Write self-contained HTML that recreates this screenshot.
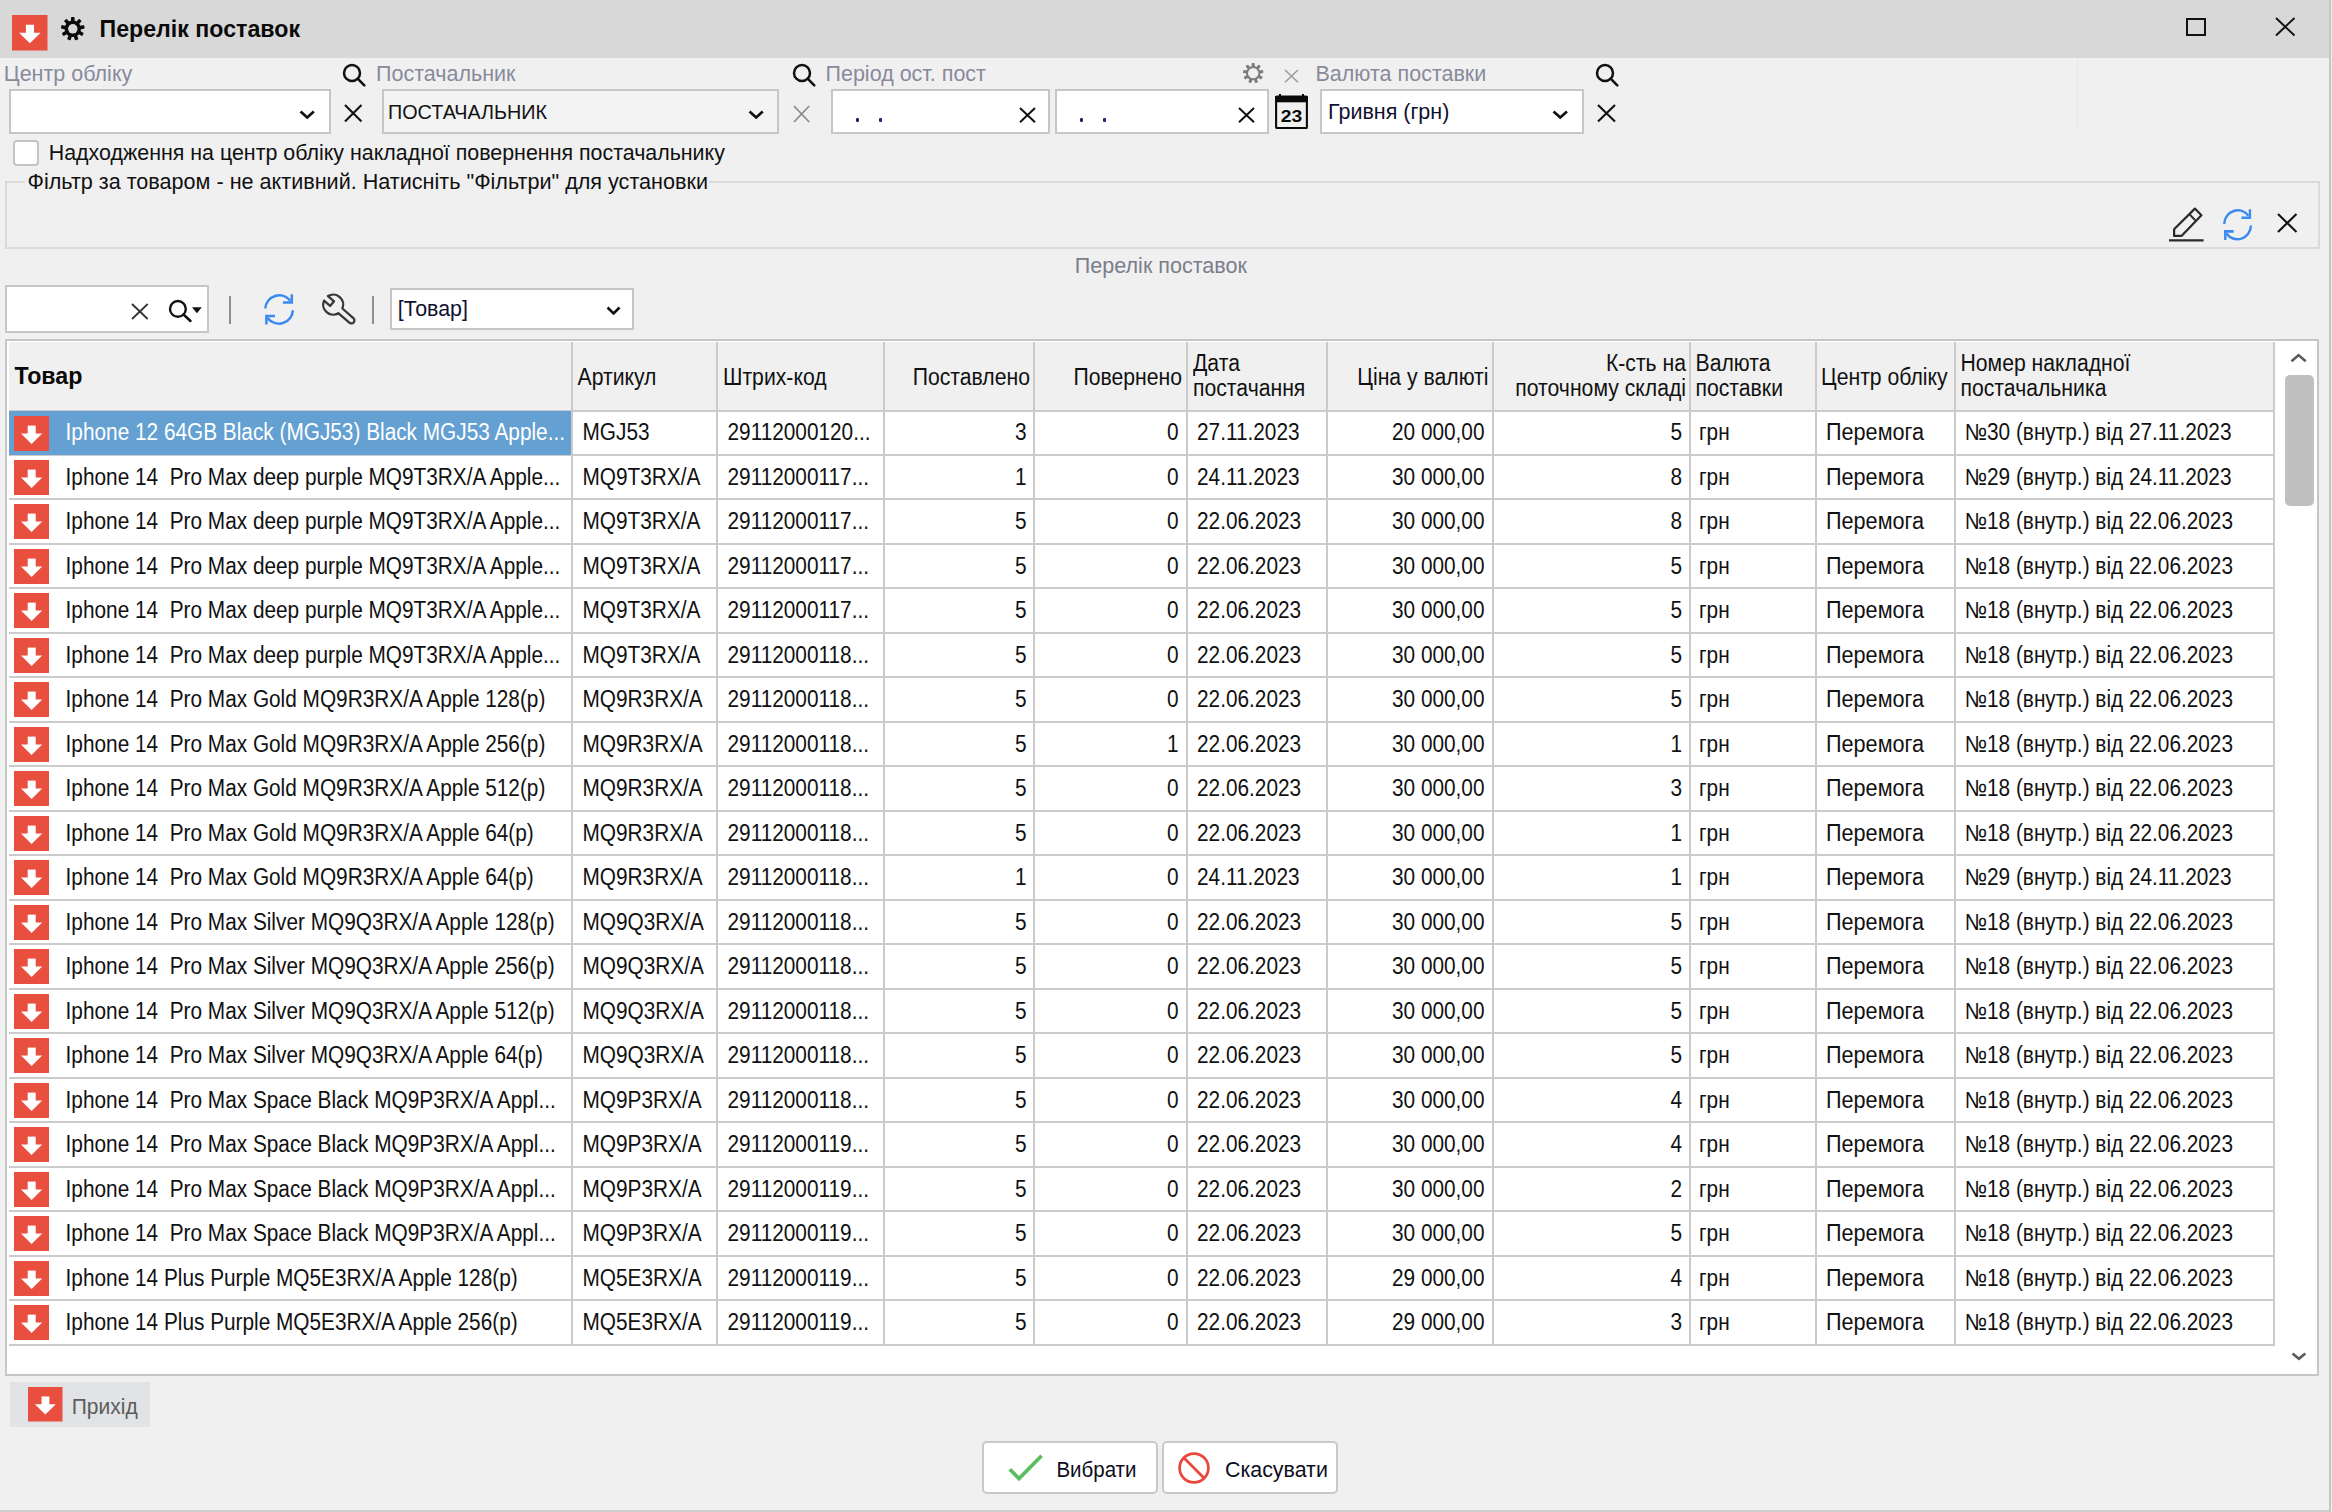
<!DOCTYPE html>
<html><head><meta charset="utf-8"><title>Перелік поставок</title>
<style>
html,body{margin:0;padding:0;}
body{width:2332px;height:1512px;position:relative;overflow:hidden;background:#f0f0f0;font-family:"Liberation Sans", sans-serif;}
.a{position:absolute;}
.t{position:absolute;line-height:1;white-space:pre;}
svg{overflow:visible;}
</style></head><body>
<div class="a" style="left:0.00px;top:0.00px;width:2332.00px;height:57.60px;background:#d8d8d8;"></div>
<svg class="a" style="left:12.30px;top:15.00px" width="35.50" height="35.50" viewBox="0 0 35.50 35.50"><g transform="scale(1.0143)"><rect width="35" height="35" fill="#e94f3f"/><rect x="13.7" y="9.6" width="8" height="9" fill="#fff"/><path d="M7 17.6L28.2 17.6L17.6 27.9Z" fill="#fff"/></g></svg>
<svg class="a" style="left:58.70px;top:15.00px" width="27.60" height="27.60" viewBox="0 0 27.60 27.60"><g transform="translate(13.8 13.8)"><g fill="#0a0a0a"><rect x="-1.77" y="-11.80" width="3.54" height="4.54" rx="0.8" transform="rotate(0.0)"/><rect x="-1.77" y="-11.80" width="3.54" height="4.54" rx="0.8" transform="rotate(40.0)"/><rect x="-1.77" y="-11.80" width="3.54" height="4.54" rx="0.8" transform="rotate(80.0)"/><rect x="-1.77" y="-11.80" width="3.54" height="4.54" rx="0.8" transform="rotate(120.0)"/><rect x="-1.77" y="-11.80" width="3.54" height="4.54" rx="0.8" transform="rotate(160.0)"/><rect x="-1.77" y="-11.80" width="3.54" height="4.54" rx="0.8" transform="rotate(200.0)"/><rect x="-1.77" y="-11.80" width="3.54" height="4.54" rx="0.8" transform="rotate(240.0)"/><rect x="-1.77" y="-11.80" width="3.54" height="4.54" rx="0.8" transform="rotate(280.0)"/><rect x="-1.77" y="-11.80" width="3.54" height="4.54" rx="0.8" transform="rotate(320.0)"/><circle r="8.26"/></g><circle r="4.72" fill="#d8d8d8"/></g></svg>
<div class="t" style="top:17.66px;font-size:23.2px;color:#0a0a0a;font-weight:700;left:99.50px;transform:scale(1.0,1.02);transform-origin:0 19.64px;">Перелік поставок</div>
<div class="a" style="left:2186.00px;top:17.50px;width:19.50px;height:18.70px;box-sizing:border-box;border:2.3px solid #111;"></div>
<svg class="a" style="left:2272.70px;top:15.30px" width="24.50" height="23.50" viewBox="0 0 24.50 23.50"><path d="M3 3L21.50 20.50M21.50 3L3 20.50" stroke="#111" stroke-width="1.9" fill="none"/></svg>
<div class="a" style="left:2329.00px;top:0.00px;width:2.00px;height:1512.00px;background:#c6c6c6;"></div>
<div class="a" style="left:2331.00px;top:0.00px;width:1.00px;height:1512.00px;background:#ebebeb;"></div>
<div class="a" style="left:0.00px;top:1509.50px;width:2329.00px;height:2.50px;background:#cdcdcd;"></div>
<div class="t" style="top:64.10px;font-size:21.5px;color:#888a9c;left:3.75px;">Центр обліку</div>
<svg class="a" style="left:341.30px;top:61.70px" width="26.30" height="26.30" viewBox="0 0 26.30 26.30"><circle cx="11.00" cy="11.00" r="8.0" stroke="#111" stroke-width="2.5" fill="none"/><path d="M16.66 16.66L23.30 23.30" stroke="#111" stroke-width="2.6" stroke-linecap="round"/></svg>
<div class="t" style="top:64.10px;font-size:21.5px;color:#888a9c;left:376.00px;">Постачальник</div>
<svg class="a" style="left:790.80px;top:61.70px" width="26.30" height="26.30" viewBox="0 0 26.30 26.30"><circle cx="11.00" cy="11.00" r="8.0" stroke="#111" stroke-width="2.5" fill="none"/><path d="M16.66 16.66L23.30 23.30" stroke="#111" stroke-width="2.6" stroke-linecap="round"/></svg>
<div class="t" style="top:64.10px;font-size:21.5px;color:#888a9c;left:825.50px;">Період ост. пост</div>
<svg class="a" style="left:1241.10px;top:61.40px" width="24.40" height="24.40" viewBox="0 0 24.40 24.40"><g transform="translate(12.2 12.2)"><g fill="#7c7c7c"><rect x="-1.53" y="-10.20" width="3.06" height="4.06" rx="0.8" transform="rotate(0.0)"/><rect x="-1.53" y="-10.20" width="3.06" height="4.06" rx="0.8" transform="rotate(40.0)"/><rect x="-1.53" y="-10.20" width="3.06" height="4.06" rx="0.8" transform="rotate(80.0)"/><rect x="-1.53" y="-10.20" width="3.06" height="4.06" rx="0.8" transform="rotate(120.0)"/><rect x="-1.53" y="-10.20" width="3.06" height="4.06" rx="0.8" transform="rotate(160.0)"/><rect x="-1.53" y="-10.20" width="3.06" height="4.06" rx="0.8" transform="rotate(200.0)"/><rect x="-1.53" y="-10.20" width="3.06" height="4.06" rx="0.8" transform="rotate(240.0)"/><rect x="-1.53" y="-10.20" width="3.06" height="4.06" rx="0.8" transform="rotate(280.0)"/><rect x="-1.53" y="-10.20" width="3.06" height="4.06" rx="0.8" transform="rotate(320.0)"/><circle r="7.14"/></g><circle r="5.14" fill="#f0f0f0"/></g></svg>
<svg class="a" style="left:1281.50px;top:66.80px" width="19.00" height="18.20" viewBox="0 0 19.00 18.20"><path d="M3 3L16.00 15.20M16.00 3L3 15.20" stroke="#9a9a9a" stroke-width="1.5" fill="none"/></svg>
<div class="t" style="top:64.10px;font-size:21.5px;color:#888a9c;left:1315.50px;">Валюта поставки</div>
<svg class="a" style="left:1594.30px;top:61.70px" width="26.30" height="26.30" viewBox="0 0 26.30 26.30"><circle cx="11.00" cy="11.00" r="8.0" stroke="#111" stroke-width="2.5" fill="none"/><path d="M16.66 16.66L23.30 23.30" stroke="#111" stroke-width="2.6" stroke-linecap="round"/></svg>
<div class="a" style="left:2077.00px;top:58.00px;width:1.20px;height:73.00px;background:#e7e7e7;"></div>
<div class="a" style="left:8.80px;top:88.60px;width:322.40px;height:45.80px;background:#fff;box-sizing:border-box;border:2px solid #c6c6c6;"></div>
<svg class="a" style="left:298.80px;top:110.20px" width="16.40" height="9.70" viewBox="0 0 16.40 9.70"><path d="M1.55 1.55L8.20 7.55L14.85 1.55" stroke="#111" stroke-width="2.7" fill="none"/></svg>
<svg class="a" style="left:342.30px;top:101.70px" width="22.50" height="22.60" viewBox="0 0 22.50 22.60"><path d="M3 3L19.50 19.60M19.50 3L3 19.60" stroke="#111" stroke-width="2.1" fill="none"/></svg>
<div class="a" style="left:381.80px;top:88.60px;width:397.40px;height:45.80px;background:#f3f3f3;box-sizing:border-box;border:2px solid #c6c6c6;"></div>
<div class="t" style="top:102.84px;font-size:19.8px;color:#111;left:388.00px;transform:scale(1.0,1.06);transform-origin:0 16.76px;">ПОСТАЧАЛЬНИК</div>
<svg class="a" style="left:747.50px;top:110.20px" width="16.30" height="9.70" viewBox="0 0 16.30 9.70"><path d="M1.55 1.55L8.15 7.55L14.75 1.55" stroke="#111" stroke-width="2.7" fill="none"/></svg>
<svg class="a" style="left:791.30px;top:102.50px" width="21.20" height="22.00" viewBox="0 0 21.20 22.00"><path d="M3 3L18.20 19.00M18.20 3L3 19.00" stroke="#8c8c8c" stroke-width="1.8" fill="none"/></svg>
<div class="a" style="left:830.80px;top:88.60px;width:219.40px;height:45.80px;background:#fff;box-sizing:border-box;border:2px solid #c6c6c6;"></div>
<svg class="a" style="left:1016.50px;top:104.50px" width="21.00" height="20.30" viewBox="0 0 21.00 20.30"><path d="M3 3L18.00 17.30M18.00 3L3 17.30" stroke="#111" stroke-width="2.0" fill="none"/></svg>
<div class="a" style="left:1055.30px;top:88.60px;width:213.40px;height:45.80px;background:#fff;box-sizing:border-box;border:2px solid #c6c6c6;"></div>
<div class="a" style="left:855.70px;top:118.20px;width:3.60px;height:3.60px;background:#1e2a6e;border-radius:1px;"></div>
<div class="a" style="left:878.70px;top:118.20px;width:3.60px;height:3.60px;background:#1e2a6e;border-radius:1px;"></div>
<div class="a" style="left:1079.70px;top:118.20px;width:3.60px;height:3.60px;background:#1e2a6e;border-radius:1px;"></div>
<div class="a" style="left:1102.70px;top:118.20px;width:3.60px;height:3.60px;background:#1e2a6e;border-radius:1px;"></div>
<svg class="a" style="left:1235.50px;top:104.50px" width="21.00" height="20.30" viewBox="0 0 21.00 20.30"><path d="M3 3L18.00 17.30M18.00 3L3 17.30" stroke="#111" stroke-width="2.0" fill="none"/></svg>
<svg class="a" style="left:1275.40px;top:94.20px" width="33.00" height="35.20" viewBox="0 0 33.00 35.20"><rect x="1.1" y="2.6" width="30.8" height="31.4" rx="0.8" fill="none" stroke="#0a0a0a" stroke-width="2.1"/><rect x="0.2" y="2" width="32.6" height="6.3" fill="#0a0a0a"/><rect x="4" y="0" width="2" height="3" fill="#0a0a0a"/><rect x="27" y="0" width="2" height="3" fill="#0a0a0a"/><text x="16.5" y="28.2" font-family="Liberation Sans" font-weight="700" font-size="17" text-anchor="middle" fill="#0a0a0a" textLength="21.5" lengthAdjust="spacingAndGlyphs">23</text></svg>
<div class="a" style="left:1320.30px;top:88.60px;width:263.90px;height:45.80px;background:#fff;box-sizing:border-box;border:2px solid #c6c6c6;"></div>
<div class="t" style="top:102.10px;font-size:21.5px;color:#101030;left:1328.00px;">Гривня (грн)</div>
<svg class="a" style="left:1552.00px;top:110.20px" width="16.50" height="9.70" viewBox="0 0 16.50 9.70"><path d="M1.55 1.55L8.25 7.55L14.95 1.55" stroke="#111" stroke-width="2.7" fill="none"/></svg>
<svg class="a" style="left:1594.50px;top:101.70px" width="23.00" height="22.60" viewBox="0 0 23.00 22.60"><path d="M3 3L20.00 19.60M20.00 3L3 19.60" stroke="#111" stroke-width="2.1" fill="none"/></svg>
<div class="a" style="left:13.00px;top:140.00px;width:26.00px;height:25.50px;background:#fff;box-sizing:border-box;border:2px solid #c4c4c4;border-radius:4px;"></div>
<div class="t" style="top:142.88px;font-size:21.4px;color:#111;left:48.75px;">Надходження на центр обліку накладної повернення постачальнику</div>
<div class="a" style="left:5.00px;top:181.00px;width:2315.00px;height:68.00px;box-sizing:border-box;border:2px solid #dadada;"></div>
<div class="a" style="left:25.00px;top:170.00px;width:684.00px;height:20.00px;background:#f0f0f0;"></div>
<div class="t" style="top:171.32px;font-size:21.6px;color:#111;left:27.50px;">Фільтр за товаром - не активний. Натисніть "Фільтри" для установки</div>
<svg class="a" style="left:2167.00px;top:206.00px" width="38.00" height="38.00" viewBox="0 0 38.00 38.00"><path d="M27.9 2.6L34.4 9.2L14.5 29.9L7.1 29.9L7.1 23.2Z" fill="none" stroke="#2a2a2a" stroke-width="2.2" stroke-linejoin="round"/><path d="M22.6 8.4L28.2 14.2" stroke="#2a2a2a" stroke-width="2.0"/><path d="M2 34.4L36.6 34.4" stroke="#2a2a2a" stroke-width="2.4"/></svg>
<svg class="a" style="left:2222.30px;top:207.80px" width="32.01" height="33.66" viewBox="0 0 32.01 33.66"><g transform="scale(0.97 1.02)" fill="none" stroke="#3a89f0" stroke-width="2.5"><path d="M2.3 15.5A14 14 0 0 1 27.2 7.6"/><path d="M29.9 17.2A14 14 0 0 1 4.6 24.9"/><path d="M28.8 1.2L28.8 9.6L20.0 9.6"/><path d="M3.4 31.4L3.4 22.9L12.0 22.9"/></g></svg>
<svg class="a" style="left:2275.30px;top:211.30px" width="24.50" height="24.00" viewBox="0 0 24.50 24.00"><path d="M3 3L21.50 21.00M21.50 3L3 21.00" stroke="#111" stroke-width="2.1" fill="none"/></svg>
<div class="t" style="top:254.96px;font-size:21.55px;color:#7b7d8b;left:1074.80px;">Перелік поставок</div>
<div class="a" style="left:5.20px;top:284.80px;width:204.20px;height:48.40px;background:#fff;box-sizing:border-box;border:2px solid #c6c6c6;"></div>
<svg class="a" style="left:128.80px;top:301.30px" width="21.70" height="21.00" viewBox="0 0 21.70 21.00"><path d="M3 3L18.70 18.00M18.70 3L3 18.00" stroke="#333" stroke-width="1.8" fill="none"/></svg>
<svg class="a" style="left:167.00px;top:298.20px" width="26.50" height="26.00" viewBox="0 0 26.50 26.00"><circle cx="10.90" cy="10.90" r="7.9" stroke="#111" stroke-width="2.4" fill="none"/><path d="M16.49 16.49L23.50 23.00" stroke="#111" stroke-width="2.5" stroke-linecap="round"/></svg>
<svg class="a" style="left:192.40px;top:307.00px" width="10.00" height="7.00" viewBox="0 0 10.00 7.00"><path d="M0 0.2L9.8 0.2L4.9 6.2Z" fill="#111"/></svg>
<div class="a" style="left:229.00px;top:295.90px;width:2.00px;height:28.30px;background:#8f8f8f;"></div>
<svg class="a" style="left:263.40px;top:293.20px" width="33.00" height="33.00" viewBox="0 0 33.00 33.00"><g transform="scale(1.0 1.0)" fill="none" stroke="#3a89f0" stroke-width="2.5"><path d="M2.3 15.5A14 14 0 0 1 27.2 7.6"/><path d="M29.9 17.2A14 14 0 0 1 4.6 24.9"/><path d="M28.8 1.2L28.8 9.6L20.0 9.6"/><path d="M3.4 31.4L3.4 22.9L12.0 22.9"/></g></svg>
<svg class="a" style="left:320.50px;top:292.80px" width="36.00" height="34.00" viewBox="0 0 36.00 34.00"><path d="M6.97 3.08A10.0 10.0 0 0 1 21.41 15.50L32.35 25.01A3.1 3.1 0 0 1 28.28 29.69L17.34 20.18A10.0 10.0 0 0 1 3.03 7.61L9.10 12.88L13.04 8.35Z" fill="none" stroke="#383838" stroke-width="2.3" stroke-linejoin="round"/></svg>
<div class="a" style="left:372.20px;top:295.90px;width:2.00px;height:28.30px;background:#8f8f8f;"></div>
<div class="a" style="left:390.10px;top:287.80px;width:244.40px;height:41.90px;background:#fff;box-sizing:border-box;border:2px solid #c6c6c6;"></div>
<div class="t" style="top:298.68px;font-size:21.4px;color:#101030;left:397.80px;">[Товар]</div>
<svg class="a" style="left:606.30px;top:305.60px" width="15.10" height="9.50" viewBox="0 0 15.10 9.50"><path d="M1.55 1.55L7.55 7.35L13.55 1.55" stroke="#111" stroke-width="2.7" fill="none"/></svg>
<div class="a" style="left:4.80px;top:338.50px;width:2314.40px;height:1037.90px;background:#fff;box-sizing:border-box;border:2px solid #c6c6c6;"></div>
<div class="a" style="left:8.50px;top:341.80px;width:2266.00px;height:68.70px;background:#f0f0f0;"></div>
<div class="a" style="left:8.50px;top:410.00px;width:2266.50px;height:2.00px;background:#cbcbcb;"></div>
<div class="a" style="left:8.50px;top:454.00px;width:2266.50px;height:2.00px;background:#cbcbcb;"></div>
<div class="a" style="left:8.50px;top:498.00px;width:2266.50px;height:2.00px;background:#cbcbcb;"></div>
<div class="a" style="left:8.50px;top:543.00px;width:2266.50px;height:2.00px;background:#cbcbcb;"></div>
<div class="a" style="left:8.50px;top:587.00px;width:2266.50px;height:2.00px;background:#cbcbcb;"></div>
<div class="a" style="left:8.50px;top:632.00px;width:2266.50px;height:2.00px;background:#cbcbcb;"></div>
<div class="a" style="left:8.50px;top:676.00px;width:2266.50px;height:2.00px;background:#cbcbcb;"></div>
<div class="a" style="left:8.50px;top:721.00px;width:2266.50px;height:2.00px;background:#cbcbcb;"></div>
<div class="a" style="left:8.50px;top:765.00px;width:2266.50px;height:2.00px;background:#cbcbcb;"></div>
<div class="a" style="left:8.50px;top:810.00px;width:2266.50px;height:2.00px;background:#cbcbcb;"></div>
<div class="a" style="left:8.50px;top:854.00px;width:2266.50px;height:2.00px;background:#cbcbcb;"></div>
<div class="a" style="left:8.50px;top:899.00px;width:2266.50px;height:2.00px;background:#cbcbcb;"></div>
<div class="a" style="left:8.50px;top:943.00px;width:2266.50px;height:2.00px;background:#cbcbcb;"></div>
<div class="a" style="left:8.50px;top:988.00px;width:2266.50px;height:2.00px;background:#cbcbcb;"></div>
<div class="a" style="left:8.50px;top:1032.00px;width:2266.50px;height:2.00px;background:#cbcbcb;"></div>
<div class="a" style="left:8.50px;top:1077.00px;width:2266.50px;height:2.00px;background:#cbcbcb;"></div>
<div class="a" style="left:8.50px;top:1121.00px;width:2266.50px;height:2.00px;background:#cbcbcb;"></div>
<div class="a" style="left:8.50px;top:1166.00px;width:2266.50px;height:2.00px;background:#cbcbcb;"></div>
<div class="a" style="left:8.50px;top:1210.00px;width:2266.50px;height:2.00px;background:#cbcbcb;"></div>
<div class="a" style="left:8.50px;top:1255.00px;width:2266.50px;height:2.00px;background:#cbcbcb;"></div>
<div class="a" style="left:8.50px;top:1299.00px;width:2266.50px;height:2.00px;background:#cbcbcb;"></div>
<div class="a" style="left:8.50px;top:1344.00px;width:2266.50px;height:2.00px;background:#cbcbcb;"></div>
<div class="a" style="left:571.00px;top:341.80px;width:2.00px;height:1004.20px;background:#cbcbcb;"></div>
<div class="a" style="left:716.00px;top:341.80px;width:2.00px;height:1004.20px;background:#cbcbcb;"></div>
<div class="a" style="left:883.00px;top:341.80px;width:2.00px;height:1004.20px;background:#cbcbcb;"></div>
<div class="a" style="left:1033.00px;top:341.80px;width:2.00px;height:1004.20px;background:#cbcbcb;"></div>
<div class="a" style="left:1186.00px;top:341.80px;width:2.00px;height:1004.20px;background:#cbcbcb;"></div>
<div class="a" style="left:1326.00px;top:341.80px;width:2.00px;height:1004.20px;background:#cbcbcb;"></div>
<div class="a" style="left:1492.00px;top:341.80px;width:2.00px;height:1004.20px;background:#cbcbcb;"></div>
<div class="a" style="left:1689.00px;top:341.80px;width:2.00px;height:1004.20px;background:#cbcbcb;"></div>
<div class="a" style="left:1815.00px;top:341.80px;width:2.00px;height:1004.20px;background:#cbcbcb;"></div>
<div class="a" style="left:1954.00px;top:341.80px;width:2.00px;height:1004.20px;background:#cbcbcb;"></div>
<div class="a" style="left:2273.00px;top:341.80px;width:2.00px;height:1004.20px;background:#cbcbcb;"></div>
<div class="t" style="top:365.16px;font-size:23.2px;color:#0a0a0a;font-weight:700;left:14.50px;transform:scale(1.0,1.05);transform-origin:0 19.64px;">Товар</div>
<div class="t" style="top:366.65px;font-size:21.2px;color:#111;left:577.50px;transform:scale(1.0,1.12);transform-origin:0 17.95px;">Артикул</div>
<div class="t" style="top:366.65px;font-size:21.2px;color:#111;left:723.00px;transform:scale(1.0,1.12);transform-origin:0 17.95px;">Штрих-код</div>
<div class="t" style="top:366.65px;font-size:21.2px;color:#111;left:430.00px;width:600px;text-align:right;transform:scale(1.0,1.12);transform-origin:600px 17.95px;">Поставлено</div>
<div class="t" style="top:366.65px;font-size:21.2px;color:#111;left:582.00px;width:600px;text-align:right;transform:scale(1.0,1.12);transform-origin:600px 17.95px;">Повернено</div>
<div class="t" style="top:353.45px;font-size:21.2px;color:#111;left:1193.00px;transform:scale(1.0,1.12);transform-origin:0 17.95px;">Дата</div>
<div class="t" style="top:378.45px;font-size:21.2px;color:#111;left:1193.00px;transform:scale(1.0,1.12);transform-origin:0 17.95px;">постачання</div>
<div class="t" style="top:366.65px;font-size:21.2px;color:#111;left:888.50px;width:600px;text-align:right;transform:scale(1.0,1.12);transform-origin:600px 17.95px;">Ціна у валюті</div>
<div class="t" style="top:353.45px;font-size:21.2px;color:#111;left:1086.00px;width:600px;text-align:right;transform:scale(1.0,1.12);transform-origin:600px 17.95px;">К-сть на</div>
<div class="t" style="top:378.45px;font-size:21.2px;color:#111;left:1086.00px;width:600px;text-align:right;transform:scale(1.0,1.12);transform-origin:600px 17.95px;">поточному складі</div>
<div class="t" style="top:353.45px;font-size:21.2px;color:#111;left:1695.50px;transform:scale(1.0,1.12);transform-origin:0 17.95px;">Валюта</div>
<div class="t" style="top:378.45px;font-size:21.2px;color:#111;left:1695.50px;transform:scale(1.0,1.12);transform-origin:0 17.95px;">поставки</div>
<div class="t" style="top:366.65px;font-size:21.2px;color:#111;left:1821.00px;transform:scale(1.0,1.12);transform-origin:0 17.95px;">Центр обліку</div>
<div class="t" style="top:353.45px;font-size:21.2px;color:#111;left:1960.50px;transform:scale(1.0,1.12);transform-origin:0 17.95px;">Номер накладної</div>
<div class="t" style="top:378.45px;font-size:21.2px;color:#111;left:1960.50px;transform:scale(1.0,1.12);transform-origin:0 17.95px;">постачальника</div>
<div class="a" style="left:8.50px;top:411.40px;width:562.70px;height:43.89px;background:#64a0d2;"></div>
<svg class="a" style="left:14.30px;top:415.50px" width="35.00" height="35.00" viewBox="0 0 35.00 35.00"><g transform="scale(1.0000)"><rect width="35" height="35" fill="#e94f3f"/><rect x="13.7" y="9.6" width="8" height="9" fill="#fff"/><path d="M7 17.6L28.2 17.6L17.6 27.9Z" fill="#fff"/></g></svg>
<div class="t" style="top:423.44px;font-size:20.8px;color:#fff;left:65.60px;transform:scale(1.0,1.12);transform-origin:0 17.61px;">Iphone 12 64GB Black (MGJ53) Black MGJ53 Apple...</div>
<div class="t" style="top:423.44px;font-size:20.8px;color:#111;left:582.50px;transform:scale(1.0,1.12);transform-origin:0 17.61px;">MGJ53</div>
<div class="t" style="top:423.44px;font-size:20.8px;color:#111;left:727.50px;transform:scale(1.0,1.12);transform-origin:0 17.61px;">29112000120...</div>
<div class="t" style="top:423.44px;font-size:20.8px;color:#111;left:426.50px;width:600px;text-align:right;transform:scale(1.0,1.12);transform-origin:600px 17.61px;">3</div>
<div class="t" style="top:423.44px;font-size:20.8px;color:#111;left:578.50px;width:600px;text-align:right;transform:scale(1.0,1.12);transform-origin:600px 17.61px;">0</div>
<div class="t" style="top:423.44px;font-size:20.8px;color:#111;left:1197.00px;transform:scale(1.0,1.12);transform-origin:0 17.61px;">27.11.2023</div>
<div class="t" style="top:423.44px;font-size:20.8px;color:#111;left:884.50px;width:600px;text-align:right;transform:scale(1.0,1.12);transform-origin:600px 17.61px;">20 000,00</div>
<div class="t" style="top:423.44px;font-size:20.8px;color:#111;left:1082.00px;width:600px;text-align:right;transform:scale(1.0,1.12);transform-origin:600px 17.61px;">5</div>
<div class="t" style="top:423.44px;font-size:20.8px;color:#111;left:1699.00px;transform:scale(1.0,1.12);transform-origin:0 17.61px;">грн</div>
<div class="t" style="top:423.44px;font-size:20.8px;color:#111;left:1825.50px;transform:scale(1.04,1.12);transform-origin:0 17.61px;">Перемога</div>
<div class="t" style="top:423.44px;font-size:20.8px;color:#111;left:1964.70px;transform:scale(1.0,1.12);transform-origin:0 17.61px;">№30 (внутр.) від 27.11.2023</div>
<svg class="a" style="left:14.30px;top:459.99px" width="35.00" height="35.00" viewBox="0 0 35.00 35.00"><g transform="scale(1.0000)"><rect width="35" height="35" fill="#e94f3f"/><rect x="13.7" y="9.6" width="8" height="9" fill="#fff"/><path d="M7 17.6L28.2 17.6L17.6 27.9Z" fill="#fff"/></g></svg>
<div class="t" style="top:467.93px;font-size:20.8px;color:#111;left:65.60px;transform:scale(1.0,1.12);transform-origin:0 17.61px;">Iphone 14  Pro Max deep purple MQ9T3RX/A Apple...</div>
<div class="t" style="top:467.93px;font-size:20.8px;color:#111;left:582.50px;transform:scale(1.0,1.12);transform-origin:0 17.61px;">MQ9T3RX/A</div>
<div class="t" style="top:467.93px;font-size:20.8px;color:#111;left:727.50px;transform:scale(1.0,1.12);transform-origin:0 17.61px;">29112000117...</div>
<div class="t" style="top:467.93px;font-size:20.8px;color:#111;left:426.50px;width:600px;text-align:right;transform:scale(1.0,1.12);transform-origin:600px 17.61px;">1</div>
<div class="t" style="top:467.93px;font-size:20.8px;color:#111;left:578.50px;width:600px;text-align:right;transform:scale(1.0,1.12);transform-origin:600px 17.61px;">0</div>
<div class="t" style="top:467.93px;font-size:20.8px;color:#111;left:1197.00px;transform:scale(1.0,1.12);transform-origin:0 17.61px;">24.11.2023</div>
<div class="t" style="top:467.93px;font-size:20.8px;color:#111;left:884.50px;width:600px;text-align:right;transform:scale(1.0,1.12);transform-origin:600px 17.61px;">30 000,00</div>
<div class="t" style="top:467.93px;font-size:20.8px;color:#111;left:1082.00px;width:600px;text-align:right;transform:scale(1.0,1.12);transform-origin:600px 17.61px;">8</div>
<div class="t" style="top:467.93px;font-size:20.8px;color:#111;left:1699.00px;transform:scale(1.0,1.12);transform-origin:0 17.61px;">грн</div>
<div class="t" style="top:467.93px;font-size:20.8px;color:#111;left:1825.50px;transform:scale(1.04,1.12);transform-origin:0 17.61px;">Перемога</div>
<div class="t" style="top:467.93px;font-size:20.8px;color:#111;left:1964.70px;transform:scale(1.0,1.12);transform-origin:0 17.61px;">№29 (внутр.) від 24.11.2023</div>
<svg class="a" style="left:14.30px;top:504.48px" width="35.00" height="35.00" viewBox="0 0 35.00 35.00"><g transform="scale(1.0000)"><rect width="35" height="35" fill="#e94f3f"/><rect x="13.7" y="9.6" width="8" height="9" fill="#fff"/><path d="M7 17.6L28.2 17.6L17.6 27.9Z" fill="#fff"/></g></svg>
<div class="t" style="top:512.42px;font-size:20.8px;color:#111;left:65.60px;transform:scale(1.0,1.12);transform-origin:0 17.61px;">Iphone 14  Pro Max deep purple MQ9T3RX/A Apple...</div>
<div class="t" style="top:512.42px;font-size:20.8px;color:#111;left:582.50px;transform:scale(1.0,1.12);transform-origin:0 17.61px;">MQ9T3RX/A</div>
<div class="t" style="top:512.42px;font-size:20.8px;color:#111;left:727.50px;transform:scale(1.0,1.12);transform-origin:0 17.61px;">29112000117...</div>
<div class="t" style="top:512.42px;font-size:20.8px;color:#111;left:426.50px;width:600px;text-align:right;transform:scale(1.0,1.12);transform-origin:600px 17.61px;">5</div>
<div class="t" style="top:512.42px;font-size:20.8px;color:#111;left:578.50px;width:600px;text-align:right;transform:scale(1.0,1.12);transform-origin:600px 17.61px;">0</div>
<div class="t" style="top:512.42px;font-size:20.8px;color:#111;left:1197.00px;transform:scale(1.0,1.12);transform-origin:0 17.61px;">22.06.2023</div>
<div class="t" style="top:512.42px;font-size:20.8px;color:#111;left:884.50px;width:600px;text-align:right;transform:scale(1.0,1.12);transform-origin:600px 17.61px;">30 000,00</div>
<div class="t" style="top:512.42px;font-size:20.8px;color:#111;left:1082.00px;width:600px;text-align:right;transform:scale(1.0,1.12);transform-origin:600px 17.61px;">8</div>
<div class="t" style="top:512.42px;font-size:20.8px;color:#111;left:1699.00px;transform:scale(1.0,1.12);transform-origin:0 17.61px;">грн</div>
<div class="t" style="top:512.42px;font-size:20.8px;color:#111;left:1825.50px;transform:scale(1.04,1.12);transform-origin:0 17.61px;">Перемога</div>
<div class="t" style="top:512.42px;font-size:20.8px;color:#111;left:1964.70px;transform:scale(1.0,1.12);transform-origin:0 17.61px;">№18 (внутр.) від 22.06.2023</div>
<svg class="a" style="left:14.30px;top:548.97px" width="35.00" height="35.00" viewBox="0 0 35.00 35.00"><g transform="scale(1.0000)"><rect width="35" height="35" fill="#e94f3f"/><rect x="13.7" y="9.6" width="8" height="9" fill="#fff"/><path d="M7 17.6L28.2 17.6L17.6 27.9Z" fill="#fff"/></g></svg>
<div class="t" style="top:556.91px;font-size:20.8px;color:#111;left:65.60px;transform:scale(1.0,1.12);transform-origin:0 17.61px;">Iphone 14  Pro Max deep purple MQ9T3RX/A Apple...</div>
<div class="t" style="top:556.91px;font-size:20.8px;color:#111;left:582.50px;transform:scale(1.0,1.12);transform-origin:0 17.61px;">MQ9T3RX/A</div>
<div class="t" style="top:556.91px;font-size:20.8px;color:#111;left:727.50px;transform:scale(1.0,1.12);transform-origin:0 17.61px;">29112000117...</div>
<div class="t" style="top:556.91px;font-size:20.8px;color:#111;left:426.50px;width:600px;text-align:right;transform:scale(1.0,1.12);transform-origin:600px 17.61px;">5</div>
<div class="t" style="top:556.91px;font-size:20.8px;color:#111;left:578.50px;width:600px;text-align:right;transform:scale(1.0,1.12);transform-origin:600px 17.61px;">0</div>
<div class="t" style="top:556.91px;font-size:20.8px;color:#111;left:1197.00px;transform:scale(1.0,1.12);transform-origin:0 17.61px;">22.06.2023</div>
<div class="t" style="top:556.91px;font-size:20.8px;color:#111;left:884.50px;width:600px;text-align:right;transform:scale(1.0,1.12);transform-origin:600px 17.61px;">30 000,00</div>
<div class="t" style="top:556.91px;font-size:20.8px;color:#111;left:1082.00px;width:600px;text-align:right;transform:scale(1.0,1.12);transform-origin:600px 17.61px;">5</div>
<div class="t" style="top:556.91px;font-size:20.8px;color:#111;left:1699.00px;transform:scale(1.0,1.12);transform-origin:0 17.61px;">грн</div>
<div class="t" style="top:556.91px;font-size:20.8px;color:#111;left:1825.50px;transform:scale(1.04,1.12);transform-origin:0 17.61px;">Перемога</div>
<div class="t" style="top:556.91px;font-size:20.8px;color:#111;left:1964.70px;transform:scale(1.0,1.12);transform-origin:0 17.61px;">№18 (внутр.) від 22.06.2023</div>
<svg class="a" style="left:14.30px;top:593.46px" width="35.00" height="35.00" viewBox="0 0 35.00 35.00"><g transform="scale(1.0000)"><rect width="35" height="35" fill="#e94f3f"/><rect x="13.7" y="9.6" width="8" height="9" fill="#fff"/><path d="M7 17.6L28.2 17.6L17.6 27.9Z" fill="#fff"/></g></svg>
<div class="t" style="top:601.40px;font-size:20.8px;color:#111;left:65.60px;transform:scale(1.0,1.12);transform-origin:0 17.61px;">Iphone 14  Pro Max deep purple MQ9T3RX/A Apple...</div>
<div class="t" style="top:601.40px;font-size:20.8px;color:#111;left:582.50px;transform:scale(1.0,1.12);transform-origin:0 17.61px;">MQ9T3RX/A</div>
<div class="t" style="top:601.40px;font-size:20.8px;color:#111;left:727.50px;transform:scale(1.0,1.12);transform-origin:0 17.61px;">29112000117...</div>
<div class="t" style="top:601.40px;font-size:20.8px;color:#111;left:426.50px;width:600px;text-align:right;transform:scale(1.0,1.12);transform-origin:600px 17.61px;">5</div>
<div class="t" style="top:601.40px;font-size:20.8px;color:#111;left:578.50px;width:600px;text-align:right;transform:scale(1.0,1.12);transform-origin:600px 17.61px;">0</div>
<div class="t" style="top:601.40px;font-size:20.8px;color:#111;left:1197.00px;transform:scale(1.0,1.12);transform-origin:0 17.61px;">22.06.2023</div>
<div class="t" style="top:601.40px;font-size:20.8px;color:#111;left:884.50px;width:600px;text-align:right;transform:scale(1.0,1.12);transform-origin:600px 17.61px;">30 000,00</div>
<div class="t" style="top:601.40px;font-size:20.8px;color:#111;left:1082.00px;width:600px;text-align:right;transform:scale(1.0,1.12);transform-origin:600px 17.61px;">5</div>
<div class="t" style="top:601.40px;font-size:20.8px;color:#111;left:1699.00px;transform:scale(1.0,1.12);transform-origin:0 17.61px;">грн</div>
<div class="t" style="top:601.40px;font-size:20.8px;color:#111;left:1825.50px;transform:scale(1.04,1.12);transform-origin:0 17.61px;">Перемога</div>
<div class="t" style="top:601.40px;font-size:20.8px;color:#111;left:1964.70px;transform:scale(1.0,1.12);transform-origin:0 17.61px;">№18 (внутр.) від 22.06.2023</div>
<svg class="a" style="left:14.30px;top:637.95px" width="35.00" height="35.00" viewBox="0 0 35.00 35.00"><g transform="scale(1.0000)"><rect width="35" height="35" fill="#e94f3f"/><rect x="13.7" y="9.6" width="8" height="9" fill="#fff"/><path d="M7 17.6L28.2 17.6L17.6 27.9Z" fill="#fff"/></g></svg>
<div class="t" style="top:645.89px;font-size:20.8px;color:#111;left:65.60px;transform:scale(1.0,1.12);transform-origin:0 17.61px;">Iphone 14  Pro Max deep purple MQ9T3RX/A Apple...</div>
<div class="t" style="top:645.89px;font-size:20.8px;color:#111;left:582.50px;transform:scale(1.0,1.12);transform-origin:0 17.61px;">MQ9T3RX/A</div>
<div class="t" style="top:645.89px;font-size:20.8px;color:#111;left:727.50px;transform:scale(1.0,1.12);transform-origin:0 17.61px;">29112000118...</div>
<div class="t" style="top:645.89px;font-size:20.8px;color:#111;left:426.50px;width:600px;text-align:right;transform:scale(1.0,1.12);transform-origin:600px 17.61px;">5</div>
<div class="t" style="top:645.89px;font-size:20.8px;color:#111;left:578.50px;width:600px;text-align:right;transform:scale(1.0,1.12);transform-origin:600px 17.61px;">0</div>
<div class="t" style="top:645.89px;font-size:20.8px;color:#111;left:1197.00px;transform:scale(1.0,1.12);transform-origin:0 17.61px;">22.06.2023</div>
<div class="t" style="top:645.89px;font-size:20.8px;color:#111;left:884.50px;width:600px;text-align:right;transform:scale(1.0,1.12);transform-origin:600px 17.61px;">30 000,00</div>
<div class="t" style="top:645.89px;font-size:20.8px;color:#111;left:1082.00px;width:600px;text-align:right;transform:scale(1.0,1.12);transform-origin:600px 17.61px;">5</div>
<div class="t" style="top:645.89px;font-size:20.8px;color:#111;left:1699.00px;transform:scale(1.0,1.12);transform-origin:0 17.61px;">грн</div>
<div class="t" style="top:645.89px;font-size:20.8px;color:#111;left:1825.50px;transform:scale(1.04,1.12);transform-origin:0 17.61px;">Перемога</div>
<div class="t" style="top:645.89px;font-size:20.8px;color:#111;left:1964.70px;transform:scale(1.0,1.12);transform-origin:0 17.61px;">№18 (внутр.) від 22.06.2023</div>
<svg class="a" style="left:14.30px;top:682.44px" width="35.00" height="35.00" viewBox="0 0 35.00 35.00"><g transform="scale(1.0000)"><rect width="35" height="35" fill="#e94f3f"/><rect x="13.7" y="9.6" width="8" height="9" fill="#fff"/><path d="M7 17.6L28.2 17.6L17.6 27.9Z" fill="#fff"/></g></svg>
<div class="t" style="top:690.38px;font-size:20.8px;color:#111;left:65.60px;transform:scale(1.0,1.12);transform-origin:0 17.61px;">Iphone 14  Pro Max Gold MQ9R3RX/A Apple 128(p)</div>
<div class="t" style="top:690.38px;font-size:20.8px;color:#111;left:582.50px;transform:scale(1.0,1.12);transform-origin:0 17.61px;">MQ9R3RX/A</div>
<div class="t" style="top:690.38px;font-size:20.8px;color:#111;left:727.50px;transform:scale(1.0,1.12);transform-origin:0 17.61px;">29112000118...</div>
<div class="t" style="top:690.38px;font-size:20.8px;color:#111;left:426.50px;width:600px;text-align:right;transform:scale(1.0,1.12);transform-origin:600px 17.61px;">5</div>
<div class="t" style="top:690.38px;font-size:20.8px;color:#111;left:578.50px;width:600px;text-align:right;transform:scale(1.0,1.12);transform-origin:600px 17.61px;">0</div>
<div class="t" style="top:690.38px;font-size:20.8px;color:#111;left:1197.00px;transform:scale(1.0,1.12);transform-origin:0 17.61px;">22.06.2023</div>
<div class="t" style="top:690.38px;font-size:20.8px;color:#111;left:884.50px;width:600px;text-align:right;transform:scale(1.0,1.12);transform-origin:600px 17.61px;">30 000,00</div>
<div class="t" style="top:690.38px;font-size:20.8px;color:#111;left:1082.00px;width:600px;text-align:right;transform:scale(1.0,1.12);transform-origin:600px 17.61px;">5</div>
<div class="t" style="top:690.38px;font-size:20.8px;color:#111;left:1699.00px;transform:scale(1.0,1.12);transform-origin:0 17.61px;">грн</div>
<div class="t" style="top:690.38px;font-size:20.8px;color:#111;left:1825.50px;transform:scale(1.04,1.12);transform-origin:0 17.61px;">Перемога</div>
<div class="t" style="top:690.38px;font-size:20.8px;color:#111;left:1964.70px;transform:scale(1.0,1.12);transform-origin:0 17.61px;">№18 (внутр.) від 22.06.2023</div>
<svg class="a" style="left:14.30px;top:726.93px" width="35.00" height="35.00" viewBox="0 0 35.00 35.00"><g transform="scale(1.0000)"><rect width="35" height="35" fill="#e94f3f"/><rect x="13.7" y="9.6" width="8" height="9" fill="#fff"/><path d="M7 17.6L28.2 17.6L17.6 27.9Z" fill="#fff"/></g></svg>
<div class="t" style="top:734.87px;font-size:20.8px;color:#111;left:65.60px;transform:scale(1.0,1.12);transform-origin:0 17.61px;">Iphone 14  Pro Max Gold MQ9R3RX/A Apple 256(p)</div>
<div class="t" style="top:734.87px;font-size:20.8px;color:#111;left:582.50px;transform:scale(1.0,1.12);transform-origin:0 17.61px;">MQ9R3RX/A</div>
<div class="t" style="top:734.87px;font-size:20.8px;color:#111;left:727.50px;transform:scale(1.0,1.12);transform-origin:0 17.61px;">29112000118...</div>
<div class="t" style="top:734.87px;font-size:20.8px;color:#111;left:426.50px;width:600px;text-align:right;transform:scale(1.0,1.12);transform-origin:600px 17.61px;">5</div>
<div class="t" style="top:734.87px;font-size:20.8px;color:#111;left:578.50px;width:600px;text-align:right;transform:scale(1.0,1.12);transform-origin:600px 17.61px;">1</div>
<div class="t" style="top:734.87px;font-size:20.8px;color:#111;left:1197.00px;transform:scale(1.0,1.12);transform-origin:0 17.61px;">22.06.2023</div>
<div class="t" style="top:734.87px;font-size:20.8px;color:#111;left:884.50px;width:600px;text-align:right;transform:scale(1.0,1.12);transform-origin:600px 17.61px;">30 000,00</div>
<div class="t" style="top:734.87px;font-size:20.8px;color:#111;left:1082.00px;width:600px;text-align:right;transform:scale(1.0,1.12);transform-origin:600px 17.61px;">1</div>
<div class="t" style="top:734.87px;font-size:20.8px;color:#111;left:1699.00px;transform:scale(1.0,1.12);transform-origin:0 17.61px;">грн</div>
<div class="t" style="top:734.87px;font-size:20.8px;color:#111;left:1825.50px;transform:scale(1.04,1.12);transform-origin:0 17.61px;">Перемога</div>
<div class="t" style="top:734.87px;font-size:20.8px;color:#111;left:1964.70px;transform:scale(1.0,1.12);transform-origin:0 17.61px;">№18 (внутр.) від 22.06.2023</div>
<svg class="a" style="left:14.30px;top:771.42px" width="35.00" height="35.00" viewBox="0 0 35.00 35.00"><g transform="scale(1.0000)"><rect width="35" height="35" fill="#e94f3f"/><rect x="13.7" y="9.6" width="8" height="9" fill="#fff"/><path d="M7 17.6L28.2 17.6L17.6 27.9Z" fill="#fff"/></g></svg>
<div class="t" style="top:779.36px;font-size:20.8px;color:#111;left:65.60px;transform:scale(1.0,1.12);transform-origin:0 17.61px;">Iphone 14  Pro Max Gold MQ9R3RX/A Apple 512(p)</div>
<div class="t" style="top:779.36px;font-size:20.8px;color:#111;left:582.50px;transform:scale(1.0,1.12);transform-origin:0 17.61px;">MQ9R3RX/A</div>
<div class="t" style="top:779.36px;font-size:20.8px;color:#111;left:727.50px;transform:scale(1.0,1.12);transform-origin:0 17.61px;">29112000118...</div>
<div class="t" style="top:779.36px;font-size:20.8px;color:#111;left:426.50px;width:600px;text-align:right;transform:scale(1.0,1.12);transform-origin:600px 17.61px;">5</div>
<div class="t" style="top:779.36px;font-size:20.8px;color:#111;left:578.50px;width:600px;text-align:right;transform:scale(1.0,1.12);transform-origin:600px 17.61px;">0</div>
<div class="t" style="top:779.36px;font-size:20.8px;color:#111;left:1197.00px;transform:scale(1.0,1.12);transform-origin:0 17.61px;">22.06.2023</div>
<div class="t" style="top:779.36px;font-size:20.8px;color:#111;left:884.50px;width:600px;text-align:right;transform:scale(1.0,1.12);transform-origin:600px 17.61px;">30 000,00</div>
<div class="t" style="top:779.36px;font-size:20.8px;color:#111;left:1082.00px;width:600px;text-align:right;transform:scale(1.0,1.12);transform-origin:600px 17.61px;">3</div>
<div class="t" style="top:779.36px;font-size:20.8px;color:#111;left:1699.00px;transform:scale(1.0,1.12);transform-origin:0 17.61px;">грн</div>
<div class="t" style="top:779.36px;font-size:20.8px;color:#111;left:1825.50px;transform:scale(1.04,1.12);transform-origin:0 17.61px;">Перемога</div>
<div class="t" style="top:779.36px;font-size:20.8px;color:#111;left:1964.70px;transform:scale(1.0,1.12);transform-origin:0 17.61px;">№18 (внутр.) від 22.06.2023</div>
<svg class="a" style="left:14.30px;top:815.91px" width="35.00" height="35.00" viewBox="0 0 35.00 35.00"><g transform="scale(1.0000)"><rect width="35" height="35" fill="#e94f3f"/><rect x="13.7" y="9.6" width="8" height="9" fill="#fff"/><path d="M7 17.6L28.2 17.6L17.6 27.9Z" fill="#fff"/></g></svg>
<div class="t" style="top:823.85px;font-size:20.8px;color:#111;left:65.60px;transform:scale(1.0,1.12);transform-origin:0 17.61px;">Iphone 14  Pro Max Gold MQ9R3RX/A Apple 64(p)</div>
<div class="t" style="top:823.85px;font-size:20.8px;color:#111;left:582.50px;transform:scale(1.0,1.12);transform-origin:0 17.61px;">MQ9R3RX/A</div>
<div class="t" style="top:823.85px;font-size:20.8px;color:#111;left:727.50px;transform:scale(1.0,1.12);transform-origin:0 17.61px;">29112000118...</div>
<div class="t" style="top:823.85px;font-size:20.8px;color:#111;left:426.50px;width:600px;text-align:right;transform:scale(1.0,1.12);transform-origin:600px 17.61px;">5</div>
<div class="t" style="top:823.85px;font-size:20.8px;color:#111;left:578.50px;width:600px;text-align:right;transform:scale(1.0,1.12);transform-origin:600px 17.61px;">0</div>
<div class="t" style="top:823.85px;font-size:20.8px;color:#111;left:1197.00px;transform:scale(1.0,1.12);transform-origin:0 17.61px;">22.06.2023</div>
<div class="t" style="top:823.85px;font-size:20.8px;color:#111;left:884.50px;width:600px;text-align:right;transform:scale(1.0,1.12);transform-origin:600px 17.61px;">30 000,00</div>
<div class="t" style="top:823.85px;font-size:20.8px;color:#111;left:1082.00px;width:600px;text-align:right;transform:scale(1.0,1.12);transform-origin:600px 17.61px;">1</div>
<div class="t" style="top:823.85px;font-size:20.8px;color:#111;left:1699.00px;transform:scale(1.0,1.12);transform-origin:0 17.61px;">грн</div>
<div class="t" style="top:823.85px;font-size:20.8px;color:#111;left:1825.50px;transform:scale(1.04,1.12);transform-origin:0 17.61px;">Перемога</div>
<div class="t" style="top:823.85px;font-size:20.8px;color:#111;left:1964.70px;transform:scale(1.0,1.12);transform-origin:0 17.61px;">№18 (внутр.) від 22.06.2023</div>
<svg class="a" style="left:14.30px;top:860.40px" width="35.00" height="35.00" viewBox="0 0 35.00 35.00"><g transform="scale(1.0000)"><rect width="35" height="35" fill="#e94f3f"/><rect x="13.7" y="9.6" width="8" height="9" fill="#fff"/><path d="M7 17.6L28.2 17.6L17.6 27.9Z" fill="#fff"/></g></svg>
<div class="t" style="top:868.34px;font-size:20.8px;color:#111;left:65.60px;transform:scale(1.0,1.12);transform-origin:0 17.61px;">Iphone 14  Pro Max Gold MQ9R3RX/A Apple 64(p)</div>
<div class="t" style="top:868.34px;font-size:20.8px;color:#111;left:582.50px;transform:scale(1.0,1.12);transform-origin:0 17.61px;">MQ9R3RX/A</div>
<div class="t" style="top:868.34px;font-size:20.8px;color:#111;left:727.50px;transform:scale(1.0,1.12);transform-origin:0 17.61px;">29112000118...</div>
<div class="t" style="top:868.34px;font-size:20.8px;color:#111;left:426.50px;width:600px;text-align:right;transform:scale(1.0,1.12);transform-origin:600px 17.61px;">1</div>
<div class="t" style="top:868.34px;font-size:20.8px;color:#111;left:578.50px;width:600px;text-align:right;transform:scale(1.0,1.12);transform-origin:600px 17.61px;">0</div>
<div class="t" style="top:868.34px;font-size:20.8px;color:#111;left:1197.00px;transform:scale(1.0,1.12);transform-origin:0 17.61px;">24.11.2023</div>
<div class="t" style="top:868.34px;font-size:20.8px;color:#111;left:884.50px;width:600px;text-align:right;transform:scale(1.0,1.12);transform-origin:600px 17.61px;">30 000,00</div>
<div class="t" style="top:868.34px;font-size:20.8px;color:#111;left:1082.00px;width:600px;text-align:right;transform:scale(1.0,1.12);transform-origin:600px 17.61px;">1</div>
<div class="t" style="top:868.34px;font-size:20.8px;color:#111;left:1699.00px;transform:scale(1.0,1.12);transform-origin:0 17.61px;">грн</div>
<div class="t" style="top:868.34px;font-size:20.8px;color:#111;left:1825.50px;transform:scale(1.04,1.12);transform-origin:0 17.61px;">Перемога</div>
<div class="t" style="top:868.34px;font-size:20.8px;color:#111;left:1964.70px;transform:scale(1.0,1.12);transform-origin:0 17.61px;">№29 (внутр.) від 24.11.2023</div>
<svg class="a" style="left:14.30px;top:904.89px" width="35.00" height="35.00" viewBox="0 0 35.00 35.00"><g transform="scale(1.0000)"><rect width="35" height="35" fill="#e94f3f"/><rect x="13.7" y="9.6" width="8" height="9" fill="#fff"/><path d="M7 17.6L28.2 17.6L17.6 27.9Z" fill="#fff"/></g></svg>
<div class="t" style="top:912.83px;font-size:20.8px;color:#111;left:65.60px;transform:scale(1.0,1.12);transform-origin:0 17.61px;">Iphone 14  Pro Max Silver MQ9Q3RX/A Apple 128(p)</div>
<div class="t" style="top:912.83px;font-size:20.8px;color:#111;left:582.50px;transform:scale(1.0,1.12);transform-origin:0 17.61px;">MQ9Q3RX/A</div>
<div class="t" style="top:912.83px;font-size:20.8px;color:#111;left:727.50px;transform:scale(1.0,1.12);transform-origin:0 17.61px;">29112000118...</div>
<div class="t" style="top:912.83px;font-size:20.8px;color:#111;left:426.50px;width:600px;text-align:right;transform:scale(1.0,1.12);transform-origin:600px 17.61px;">5</div>
<div class="t" style="top:912.83px;font-size:20.8px;color:#111;left:578.50px;width:600px;text-align:right;transform:scale(1.0,1.12);transform-origin:600px 17.61px;">0</div>
<div class="t" style="top:912.83px;font-size:20.8px;color:#111;left:1197.00px;transform:scale(1.0,1.12);transform-origin:0 17.61px;">22.06.2023</div>
<div class="t" style="top:912.83px;font-size:20.8px;color:#111;left:884.50px;width:600px;text-align:right;transform:scale(1.0,1.12);transform-origin:600px 17.61px;">30 000,00</div>
<div class="t" style="top:912.83px;font-size:20.8px;color:#111;left:1082.00px;width:600px;text-align:right;transform:scale(1.0,1.12);transform-origin:600px 17.61px;">5</div>
<div class="t" style="top:912.83px;font-size:20.8px;color:#111;left:1699.00px;transform:scale(1.0,1.12);transform-origin:0 17.61px;">грн</div>
<div class="t" style="top:912.83px;font-size:20.8px;color:#111;left:1825.50px;transform:scale(1.04,1.12);transform-origin:0 17.61px;">Перемога</div>
<div class="t" style="top:912.83px;font-size:20.8px;color:#111;left:1964.70px;transform:scale(1.0,1.12);transform-origin:0 17.61px;">№18 (внутр.) від 22.06.2023</div>
<svg class="a" style="left:14.30px;top:949.38px" width="35.00" height="35.00" viewBox="0 0 35.00 35.00"><g transform="scale(1.0000)"><rect width="35" height="35" fill="#e94f3f"/><rect x="13.7" y="9.6" width="8" height="9" fill="#fff"/><path d="M7 17.6L28.2 17.6L17.6 27.9Z" fill="#fff"/></g></svg>
<div class="t" style="top:957.32px;font-size:20.8px;color:#111;left:65.60px;transform:scale(1.0,1.12);transform-origin:0 17.61px;">Iphone 14  Pro Max Silver MQ9Q3RX/A Apple 256(p)</div>
<div class="t" style="top:957.32px;font-size:20.8px;color:#111;left:582.50px;transform:scale(1.0,1.12);transform-origin:0 17.61px;">MQ9Q3RX/A</div>
<div class="t" style="top:957.32px;font-size:20.8px;color:#111;left:727.50px;transform:scale(1.0,1.12);transform-origin:0 17.61px;">29112000118...</div>
<div class="t" style="top:957.32px;font-size:20.8px;color:#111;left:426.50px;width:600px;text-align:right;transform:scale(1.0,1.12);transform-origin:600px 17.61px;">5</div>
<div class="t" style="top:957.32px;font-size:20.8px;color:#111;left:578.50px;width:600px;text-align:right;transform:scale(1.0,1.12);transform-origin:600px 17.61px;">0</div>
<div class="t" style="top:957.32px;font-size:20.8px;color:#111;left:1197.00px;transform:scale(1.0,1.12);transform-origin:0 17.61px;">22.06.2023</div>
<div class="t" style="top:957.32px;font-size:20.8px;color:#111;left:884.50px;width:600px;text-align:right;transform:scale(1.0,1.12);transform-origin:600px 17.61px;">30 000,00</div>
<div class="t" style="top:957.32px;font-size:20.8px;color:#111;left:1082.00px;width:600px;text-align:right;transform:scale(1.0,1.12);transform-origin:600px 17.61px;">5</div>
<div class="t" style="top:957.32px;font-size:20.8px;color:#111;left:1699.00px;transform:scale(1.0,1.12);transform-origin:0 17.61px;">грн</div>
<div class="t" style="top:957.32px;font-size:20.8px;color:#111;left:1825.50px;transform:scale(1.04,1.12);transform-origin:0 17.61px;">Перемога</div>
<div class="t" style="top:957.32px;font-size:20.8px;color:#111;left:1964.70px;transform:scale(1.0,1.12);transform-origin:0 17.61px;">№18 (внутр.) від 22.06.2023</div>
<svg class="a" style="left:14.30px;top:993.87px" width="35.00" height="35.00" viewBox="0 0 35.00 35.00"><g transform="scale(1.0000)"><rect width="35" height="35" fill="#e94f3f"/><rect x="13.7" y="9.6" width="8" height="9" fill="#fff"/><path d="M7 17.6L28.2 17.6L17.6 27.9Z" fill="#fff"/></g></svg>
<div class="t" style="top:1001.81px;font-size:20.8px;color:#111;left:65.60px;transform:scale(1.0,1.12);transform-origin:0 17.61px;">Iphone 14  Pro Max Silver MQ9Q3RX/A Apple 512(p)</div>
<div class="t" style="top:1001.81px;font-size:20.8px;color:#111;left:582.50px;transform:scale(1.0,1.12);transform-origin:0 17.61px;">MQ9Q3RX/A</div>
<div class="t" style="top:1001.81px;font-size:20.8px;color:#111;left:727.50px;transform:scale(1.0,1.12);transform-origin:0 17.61px;">29112000118...</div>
<div class="t" style="top:1001.81px;font-size:20.8px;color:#111;left:426.50px;width:600px;text-align:right;transform:scale(1.0,1.12);transform-origin:600px 17.61px;">5</div>
<div class="t" style="top:1001.81px;font-size:20.8px;color:#111;left:578.50px;width:600px;text-align:right;transform:scale(1.0,1.12);transform-origin:600px 17.61px;">0</div>
<div class="t" style="top:1001.81px;font-size:20.8px;color:#111;left:1197.00px;transform:scale(1.0,1.12);transform-origin:0 17.61px;">22.06.2023</div>
<div class="t" style="top:1001.81px;font-size:20.8px;color:#111;left:884.50px;width:600px;text-align:right;transform:scale(1.0,1.12);transform-origin:600px 17.61px;">30 000,00</div>
<div class="t" style="top:1001.81px;font-size:20.8px;color:#111;left:1082.00px;width:600px;text-align:right;transform:scale(1.0,1.12);transform-origin:600px 17.61px;">5</div>
<div class="t" style="top:1001.81px;font-size:20.8px;color:#111;left:1699.00px;transform:scale(1.0,1.12);transform-origin:0 17.61px;">грн</div>
<div class="t" style="top:1001.81px;font-size:20.8px;color:#111;left:1825.50px;transform:scale(1.04,1.12);transform-origin:0 17.61px;">Перемога</div>
<div class="t" style="top:1001.81px;font-size:20.8px;color:#111;left:1964.70px;transform:scale(1.0,1.12);transform-origin:0 17.61px;">№18 (внутр.) від 22.06.2023</div>
<svg class="a" style="left:14.30px;top:1038.36px" width="35.00" height="35.00" viewBox="0 0 35.00 35.00"><g transform="scale(1.0000)"><rect width="35" height="35" fill="#e94f3f"/><rect x="13.7" y="9.6" width="8" height="9" fill="#fff"/><path d="M7 17.6L28.2 17.6L17.6 27.9Z" fill="#fff"/></g></svg>
<div class="t" style="top:1046.30px;font-size:20.8px;color:#111;left:65.60px;transform:scale(1.0,1.12);transform-origin:0 17.61px;">Iphone 14  Pro Max Silver MQ9Q3RX/A Apple 64(p)</div>
<div class="t" style="top:1046.30px;font-size:20.8px;color:#111;left:582.50px;transform:scale(1.0,1.12);transform-origin:0 17.61px;">MQ9Q3RX/A</div>
<div class="t" style="top:1046.30px;font-size:20.8px;color:#111;left:727.50px;transform:scale(1.0,1.12);transform-origin:0 17.61px;">29112000118...</div>
<div class="t" style="top:1046.30px;font-size:20.8px;color:#111;left:426.50px;width:600px;text-align:right;transform:scale(1.0,1.12);transform-origin:600px 17.61px;">5</div>
<div class="t" style="top:1046.30px;font-size:20.8px;color:#111;left:578.50px;width:600px;text-align:right;transform:scale(1.0,1.12);transform-origin:600px 17.61px;">0</div>
<div class="t" style="top:1046.30px;font-size:20.8px;color:#111;left:1197.00px;transform:scale(1.0,1.12);transform-origin:0 17.61px;">22.06.2023</div>
<div class="t" style="top:1046.30px;font-size:20.8px;color:#111;left:884.50px;width:600px;text-align:right;transform:scale(1.0,1.12);transform-origin:600px 17.61px;">30 000,00</div>
<div class="t" style="top:1046.30px;font-size:20.8px;color:#111;left:1082.00px;width:600px;text-align:right;transform:scale(1.0,1.12);transform-origin:600px 17.61px;">5</div>
<div class="t" style="top:1046.30px;font-size:20.8px;color:#111;left:1699.00px;transform:scale(1.0,1.12);transform-origin:0 17.61px;">грн</div>
<div class="t" style="top:1046.30px;font-size:20.8px;color:#111;left:1825.50px;transform:scale(1.04,1.12);transform-origin:0 17.61px;">Перемога</div>
<div class="t" style="top:1046.30px;font-size:20.8px;color:#111;left:1964.70px;transform:scale(1.0,1.12);transform-origin:0 17.61px;">№18 (внутр.) від 22.06.2023</div>
<svg class="a" style="left:14.30px;top:1082.85px" width="35.00" height="35.00" viewBox="0 0 35.00 35.00"><g transform="scale(1.0000)"><rect width="35" height="35" fill="#e94f3f"/><rect x="13.7" y="9.6" width="8" height="9" fill="#fff"/><path d="M7 17.6L28.2 17.6L17.6 27.9Z" fill="#fff"/></g></svg>
<div class="t" style="top:1090.79px;font-size:20.8px;color:#111;left:65.60px;transform:scale(1.0,1.12);transform-origin:0 17.61px;">Iphone 14  Pro Max Space Black MQ9P3RX/A Appl...</div>
<div class="t" style="top:1090.79px;font-size:20.8px;color:#111;left:582.50px;transform:scale(1.0,1.12);transform-origin:0 17.61px;">MQ9P3RX/A</div>
<div class="t" style="top:1090.79px;font-size:20.8px;color:#111;left:727.50px;transform:scale(1.0,1.12);transform-origin:0 17.61px;">29112000118...</div>
<div class="t" style="top:1090.79px;font-size:20.8px;color:#111;left:426.50px;width:600px;text-align:right;transform:scale(1.0,1.12);transform-origin:600px 17.61px;">5</div>
<div class="t" style="top:1090.79px;font-size:20.8px;color:#111;left:578.50px;width:600px;text-align:right;transform:scale(1.0,1.12);transform-origin:600px 17.61px;">0</div>
<div class="t" style="top:1090.79px;font-size:20.8px;color:#111;left:1197.00px;transform:scale(1.0,1.12);transform-origin:0 17.61px;">22.06.2023</div>
<div class="t" style="top:1090.79px;font-size:20.8px;color:#111;left:884.50px;width:600px;text-align:right;transform:scale(1.0,1.12);transform-origin:600px 17.61px;">30 000,00</div>
<div class="t" style="top:1090.79px;font-size:20.8px;color:#111;left:1082.00px;width:600px;text-align:right;transform:scale(1.0,1.12);transform-origin:600px 17.61px;">4</div>
<div class="t" style="top:1090.79px;font-size:20.8px;color:#111;left:1699.00px;transform:scale(1.0,1.12);transform-origin:0 17.61px;">грн</div>
<div class="t" style="top:1090.79px;font-size:20.8px;color:#111;left:1825.50px;transform:scale(1.04,1.12);transform-origin:0 17.61px;">Перемога</div>
<div class="t" style="top:1090.79px;font-size:20.8px;color:#111;left:1964.70px;transform:scale(1.0,1.12);transform-origin:0 17.61px;">№18 (внутр.) від 22.06.2023</div>
<svg class="a" style="left:14.30px;top:1127.34px" width="35.00" height="35.00" viewBox="0 0 35.00 35.00"><g transform="scale(1.0000)"><rect width="35" height="35" fill="#e94f3f"/><rect x="13.7" y="9.6" width="8" height="9" fill="#fff"/><path d="M7 17.6L28.2 17.6L17.6 27.9Z" fill="#fff"/></g></svg>
<div class="t" style="top:1135.28px;font-size:20.8px;color:#111;left:65.60px;transform:scale(1.0,1.12);transform-origin:0 17.61px;">Iphone 14  Pro Max Space Black MQ9P3RX/A Appl...</div>
<div class="t" style="top:1135.28px;font-size:20.8px;color:#111;left:582.50px;transform:scale(1.0,1.12);transform-origin:0 17.61px;">MQ9P3RX/A</div>
<div class="t" style="top:1135.28px;font-size:20.8px;color:#111;left:727.50px;transform:scale(1.0,1.12);transform-origin:0 17.61px;">29112000119...</div>
<div class="t" style="top:1135.28px;font-size:20.8px;color:#111;left:426.50px;width:600px;text-align:right;transform:scale(1.0,1.12);transform-origin:600px 17.61px;">5</div>
<div class="t" style="top:1135.28px;font-size:20.8px;color:#111;left:578.50px;width:600px;text-align:right;transform:scale(1.0,1.12);transform-origin:600px 17.61px;">0</div>
<div class="t" style="top:1135.28px;font-size:20.8px;color:#111;left:1197.00px;transform:scale(1.0,1.12);transform-origin:0 17.61px;">22.06.2023</div>
<div class="t" style="top:1135.28px;font-size:20.8px;color:#111;left:884.50px;width:600px;text-align:right;transform:scale(1.0,1.12);transform-origin:600px 17.61px;">30 000,00</div>
<div class="t" style="top:1135.28px;font-size:20.8px;color:#111;left:1082.00px;width:600px;text-align:right;transform:scale(1.0,1.12);transform-origin:600px 17.61px;">4</div>
<div class="t" style="top:1135.28px;font-size:20.8px;color:#111;left:1699.00px;transform:scale(1.0,1.12);transform-origin:0 17.61px;">грн</div>
<div class="t" style="top:1135.28px;font-size:20.8px;color:#111;left:1825.50px;transform:scale(1.04,1.12);transform-origin:0 17.61px;">Перемога</div>
<div class="t" style="top:1135.28px;font-size:20.8px;color:#111;left:1964.70px;transform:scale(1.0,1.12);transform-origin:0 17.61px;">№18 (внутр.) від 22.06.2023</div>
<svg class="a" style="left:14.30px;top:1171.83px" width="35.00" height="35.00" viewBox="0 0 35.00 35.00"><g transform="scale(1.0000)"><rect width="35" height="35" fill="#e94f3f"/><rect x="13.7" y="9.6" width="8" height="9" fill="#fff"/><path d="M7 17.6L28.2 17.6L17.6 27.9Z" fill="#fff"/></g></svg>
<div class="t" style="top:1179.77px;font-size:20.8px;color:#111;left:65.60px;transform:scale(1.0,1.12);transform-origin:0 17.61px;">Iphone 14  Pro Max Space Black MQ9P3RX/A Appl...</div>
<div class="t" style="top:1179.77px;font-size:20.8px;color:#111;left:582.50px;transform:scale(1.0,1.12);transform-origin:0 17.61px;">MQ9P3RX/A</div>
<div class="t" style="top:1179.77px;font-size:20.8px;color:#111;left:727.50px;transform:scale(1.0,1.12);transform-origin:0 17.61px;">29112000119...</div>
<div class="t" style="top:1179.77px;font-size:20.8px;color:#111;left:426.50px;width:600px;text-align:right;transform:scale(1.0,1.12);transform-origin:600px 17.61px;">5</div>
<div class="t" style="top:1179.77px;font-size:20.8px;color:#111;left:578.50px;width:600px;text-align:right;transform:scale(1.0,1.12);transform-origin:600px 17.61px;">0</div>
<div class="t" style="top:1179.77px;font-size:20.8px;color:#111;left:1197.00px;transform:scale(1.0,1.12);transform-origin:0 17.61px;">22.06.2023</div>
<div class="t" style="top:1179.77px;font-size:20.8px;color:#111;left:884.50px;width:600px;text-align:right;transform:scale(1.0,1.12);transform-origin:600px 17.61px;">30 000,00</div>
<div class="t" style="top:1179.77px;font-size:20.8px;color:#111;left:1082.00px;width:600px;text-align:right;transform:scale(1.0,1.12);transform-origin:600px 17.61px;">2</div>
<div class="t" style="top:1179.77px;font-size:20.8px;color:#111;left:1699.00px;transform:scale(1.0,1.12);transform-origin:0 17.61px;">грн</div>
<div class="t" style="top:1179.77px;font-size:20.8px;color:#111;left:1825.50px;transform:scale(1.04,1.12);transform-origin:0 17.61px;">Перемога</div>
<div class="t" style="top:1179.77px;font-size:20.8px;color:#111;left:1964.70px;transform:scale(1.0,1.12);transform-origin:0 17.61px;">№18 (внутр.) від 22.06.2023</div>
<svg class="a" style="left:14.30px;top:1216.32px" width="35.00" height="35.00" viewBox="0 0 35.00 35.00"><g transform="scale(1.0000)"><rect width="35" height="35" fill="#e94f3f"/><rect x="13.7" y="9.6" width="8" height="9" fill="#fff"/><path d="M7 17.6L28.2 17.6L17.6 27.9Z" fill="#fff"/></g></svg>
<div class="t" style="top:1224.26px;font-size:20.8px;color:#111;left:65.60px;transform:scale(1.0,1.12);transform-origin:0 17.61px;">Iphone 14  Pro Max Space Black MQ9P3RX/A Appl...</div>
<div class="t" style="top:1224.26px;font-size:20.8px;color:#111;left:582.50px;transform:scale(1.0,1.12);transform-origin:0 17.61px;">MQ9P3RX/A</div>
<div class="t" style="top:1224.26px;font-size:20.8px;color:#111;left:727.50px;transform:scale(1.0,1.12);transform-origin:0 17.61px;">29112000119...</div>
<div class="t" style="top:1224.26px;font-size:20.8px;color:#111;left:426.50px;width:600px;text-align:right;transform:scale(1.0,1.12);transform-origin:600px 17.61px;">5</div>
<div class="t" style="top:1224.26px;font-size:20.8px;color:#111;left:578.50px;width:600px;text-align:right;transform:scale(1.0,1.12);transform-origin:600px 17.61px;">0</div>
<div class="t" style="top:1224.26px;font-size:20.8px;color:#111;left:1197.00px;transform:scale(1.0,1.12);transform-origin:0 17.61px;">22.06.2023</div>
<div class="t" style="top:1224.26px;font-size:20.8px;color:#111;left:884.50px;width:600px;text-align:right;transform:scale(1.0,1.12);transform-origin:600px 17.61px;">30 000,00</div>
<div class="t" style="top:1224.26px;font-size:20.8px;color:#111;left:1082.00px;width:600px;text-align:right;transform:scale(1.0,1.12);transform-origin:600px 17.61px;">5</div>
<div class="t" style="top:1224.26px;font-size:20.8px;color:#111;left:1699.00px;transform:scale(1.0,1.12);transform-origin:0 17.61px;">грн</div>
<div class="t" style="top:1224.26px;font-size:20.8px;color:#111;left:1825.50px;transform:scale(1.04,1.12);transform-origin:0 17.61px;">Перемога</div>
<div class="t" style="top:1224.26px;font-size:20.8px;color:#111;left:1964.70px;transform:scale(1.0,1.12);transform-origin:0 17.61px;">№18 (внутр.) від 22.06.2023</div>
<svg class="a" style="left:14.30px;top:1260.81px" width="35.00" height="35.00" viewBox="0 0 35.00 35.00"><g transform="scale(1.0000)"><rect width="35" height="35" fill="#e94f3f"/><rect x="13.7" y="9.6" width="8" height="9" fill="#fff"/><path d="M7 17.6L28.2 17.6L17.6 27.9Z" fill="#fff"/></g></svg>
<div class="t" style="top:1268.75px;font-size:20.8px;color:#111;left:65.60px;transform:scale(1.0,1.12);transform-origin:0 17.61px;">Iphone 14 Plus Purple MQ5E3RX/A Apple 128(p)</div>
<div class="t" style="top:1268.75px;font-size:20.8px;color:#111;left:582.50px;transform:scale(1.0,1.12);transform-origin:0 17.61px;">MQ5E3RX/A</div>
<div class="t" style="top:1268.75px;font-size:20.8px;color:#111;left:727.50px;transform:scale(1.0,1.12);transform-origin:0 17.61px;">29112000119...</div>
<div class="t" style="top:1268.75px;font-size:20.8px;color:#111;left:426.50px;width:600px;text-align:right;transform:scale(1.0,1.12);transform-origin:600px 17.61px;">5</div>
<div class="t" style="top:1268.75px;font-size:20.8px;color:#111;left:578.50px;width:600px;text-align:right;transform:scale(1.0,1.12);transform-origin:600px 17.61px;">0</div>
<div class="t" style="top:1268.75px;font-size:20.8px;color:#111;left:1197.00px;transform:scale(1.0,1.12);transform-origin:0 17.61px;">22.06.2023</div>
<div class="t" style="top:1268.75px;font-size:20.8px;color:#111;left:884.50px;width:600px;text-align:right;transform:scale(1.0,1.12);transform-origin:600px 17.61px;">29 000,00</div>
<div class="t" style="top:1268.75px;font-size:20.8px;color:#111;left:1082.00px;width:600px;text-align:right;transform:scale(1.0,1.12);transform-origin:600px 17.61px;">4</div>
<div class="t" style="top:1268.75px;font-size:20.8px;color:#111;left:1699.00px;transform:scale(1.0,1.12);transform-origin:0 17.61px;">грн</div>
<div class="t" style="top:1268.75px;font-size:20.8px;color:#111;left:1825.50px;transform:scale(1.04,1.12);transform-origin:0 17.61px;">Перемога</div>
<div class="t" style="top:1268.75px;font-size:20.8px;color:#111;left:1964.70px;transform:scale(1.0,1.12);transform-origin:0 17.61px;">№18 (внутр.) від 22.06.2023</div>
<svg class="a" style="left:14.30px;top:1305.30px" width="35.00" height="35.00" viewBox="0 0 35.00 35.00"><g transform="scale(1.0000)"><rect width="35" height="35" fill="#e94f3f"/><rect x="13.7" y="9.6" width="8" height="9" fill="#fff"/><path d="M7 17.6L28.2 17.6L17.6 27.9Z" fill="#fff"/></g></svg>
<div class="t" style="top:1313.24px;font-size:20.8px;color:#111;left:65.60px;transform:scale(1.0,1.12);transform-origin:0 17.61px;">Iphone 14 Plus Purple MQ5E3RX/A Apple 256(p)</div>
<div class="t" style="top:1313.24px;font-size:20.8px;color:#111;left:582.50px;transform:scale(1.0,1.12);transform-origin:0 17.61px;">MQ5E3RX/A</div>
<div class="t" style="top:1313.24px;font-size:20.8px;color:#111;left:727.50px;transform:scale(1.0,1.12);transform-origin:0 17.61px;">29112000119...</div>
<div class="t" style="top:1313.24px;font-size:20.8px;color:#111;left:426.50px;width:600px;text-align:right;transform:scale(1.0,1.12);transform-origin:600px 17.61px;">5</div>
<div class="t" style="top:1313.24px;font-size:20.8px;color:#111;left:578.50px;width:600px;text-align:right;transform:scale(1.0,1.12);transform-origin:600px 17.61px;">0</div>
<div class="t" style="top:1313.24px;font-size:20.8px;color:#111;left:1197.00px;transform:scale(1.0,1.12);transform-origin:0 17.61px;">22.06.2023</div>
<div class="t" style="top:1313.24px;font-size:20.8px;color:#111;left:884.50px;width:600px;text-align:right;transform:scale(1.0,1.12);transform-origin:600px 17.61px;">29 000,00</div>
<div class="t" style="top:1313.24px;font-size:20.8px;color:#111;left:1082.00px;width:600px;text-align:right;transform:scale(1.0,1.12);transform-origin:600px 17.61px;">3</div>
<div class="t" style="top:1313.24px;font-size:20.8px;color:#111;left:1699.00px;transform:scale(1.0,1.12);transform-origin:0 17.61px;">грн</div>
<div class="t" style="top:1313.24px;font-size:20.8px;color:#111;left:1825.50px;transform:scale(1.04,1.12);transform-origin:0 17.61px;">Перемога</div>
<div class="t" style="top:1313.24px;font-size:20.8px;color:#111;left:1964.70px;transform:scale(1.0,1.12);transform-origin:0 17.61px;">№18 (внутр.) від 22.06.2023</div>
<svg class="a" style="left:2290.20px;top:353.20px" width="17.20" height="9.80" viewBox="0 0 17.20 9.80"><path d="M1.50 8.30L8.60 2.10L15.70 8.30" stroke="#5a5a5a" stroke-width="2.6" fill="none"/></svg>
<div class="a" style="left:2285.00px;top:375.00px;width:28.50px;height:131.00px;background:#c0c0c0;border-radius:5px;"></div>
<svg class="a" style="left:2291.40px;top:1352.40px" width="15.80" height="8.90" viewBox="0 0 15.80 8.90"><path d="M1.50 1.50L7.90 6.80L14.30 1.50" stroke="#5a5a5a" stroke-width="2.6" fill="none"/></svg>
<div class="a" style="left:9.50px;top:1382.00px;width:140.00px;height:45.00px;background:#e1e3e6;"></div>
<svg class="a" style="left:28.00px;top:1386.75px" width="34.50" height="34.50" viewBox="0 0 34.50 34.50"><g transform="scale(0.9857)"><rect width="35" height="35" fill="#e94f3f"/><rect x="13.7" y="9.6" width="8" height="9" fill="#fff"/><path d="M7 17.6L28.2 17.6L17.6 27.9Z" fill="#fff"/></g></svg>
<div class="t" style="top:1396.22px;font-size:21.0px;color:#5c5c5c;left:71.75px;transform:scale(1.0,1.04);transform-origin:0 17.78px;">Прихід</div>
<div class="a" style="left:982.20px;top:1441.40px;width:176.00px;height:52.60px;background:#fff;box-sizing:border-box;border:2px solid #c8c8c8;border-radius:5px;"></div>
<svg class="a" style="left:1007.00px;top:1453.00px" width="38.00" height="30.00" viewBox="0 0 38.00 30.00"><path d="M2.8 16.3L12 25.6L34.6 2.8" fill="none" stroke="#5bbd5f" stroke-width="3.7"/></svg>
<div class="t" style="top:1460.45px;font-size:20.5px;color:#0d0d20;left:1056.40px;transform:scale(1.0,1.08);transform-origin:0 17.35px;">Вибрати</div>
<div class="a" style="left:1162.00px;top:1441.40px;width:176.30px;height:52.60px;background:#fff;box-sizing:border-box;border:2px solid #c8c8c8;border-radius:5px;"></div>
<svg class="a" style="left:1177.00px;top:1450.50px" width="34.00" height="34.00" viewBox="0 0 34.00 34.00"><circle cx="17" cy="17" r="14.4" fill="none" stroke="#e9463c" stroke-width="2.7"/><path d="M6.8 6.8L27.2 27.2" stroke="#e9463c" stroke-width="2.7"/></svg>
<div class="t" style="top:1459.88px;font-size:21.4px;color:#0d0d20;left:1225.00px;transform:scale(1.0,1.05);transform-origin:0 18.12px;">Скасувати</div>
</body></html>
